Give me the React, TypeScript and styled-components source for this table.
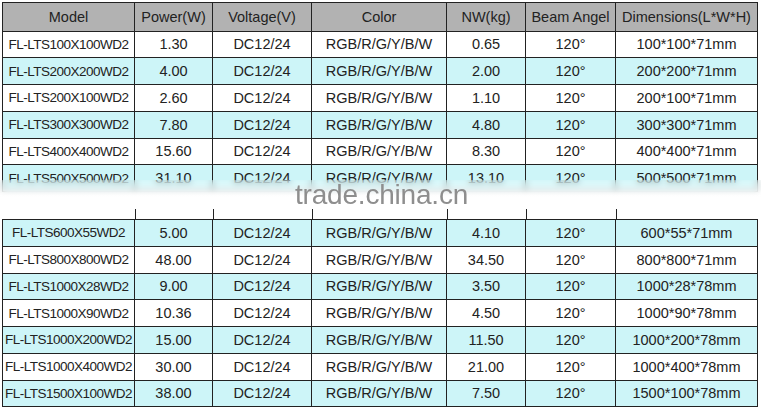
import React from "react";
import styled, { createGlobalStyle } from "styled-components";

const Global = createGlobalStyle`
  html, body { margin: 0; padding: 0; background: #fff; }
  body { font-family: "Liberation Sans", Arial, sans-serif; color: #222; }
`;

const Page = styled.div`
  position: relative;
  padding: 2px 0 0 2px;
  width: 761px;
  height: 408px;
  box-sizing: border-box;
  overflow: hidden;
`;

const Table = styled.table`
  border-collapse: collapse;
  table-layout: fixed;
  width: 755px;
`;

const HeadCell = styled.th`
  background: #b2b2b2;
  border: 1px solid #222;
  height: 27.5px;
  padding: 0;
  font-weight: normal;
  font-size: 14.5px;
  color: #222;
  text-align: center;
  white-space: nowrap;
  overflow: hidden;
`;

const Row = styled.tr<{ $tint: boolean }>`
  background: ${(p) => (p.$tint ? "#cdf5f8" : "#ffffff")};
`;

const Cell = styled.td<{ $model?: boolean }>`
  border: 1px solid #222;
  height: 25.75px;
  padding: 0;
  text-align: center;
  font-size: ${(p) => (p.$model ? "13.5px" : "14.5px")};
  letter-spacing: ${(p) => (p.$model ? "-0.5px" : "0")};
  color: #222;
  white-space: nowrap;
  overflow: hidden;
`;

const BandCell = styled.td<{ $first?: boolean }>`
  border: none;
  border-bottom: 1px solid #222;
  height: 27px;
  padding: 0;
  background: ${(p) =>
    p.$first
      ? "#fff"
      : "linear-gradient(#222, #222) left bottom / 1px 10px no-repeat, #fff"};
`;

const BlurStrip = styled.div`
  position: absolute;
  left: 0;
  top: 180px;
  width: 761px;
  height: 17px;
  backdrop-filter: blur(3px);
  background: linear-gradient(
    rgba(255, 255, 255, 0.15),
    rgba(255, 255, 255, 0.55) 60%,
    rgba(255, 255, 255, 1)
  );
`;

const Watermark = styled.div`
  position: absolute;
  left: 295px;
  top: 179px;
  font-family: "Liberation Sans", Arial, sans-serif;
  font-size: 28px;
  color: #8e8e8e;
  letter-spacing: -0.2px;
  line-height: 32px;
`;

const widths = [132, 78, 99, 135, 79, 90, 142];
const headers = [
  "Model",
  "Power(W)",
  "Voltage(V)",
  "Color",
  "NW(kg)",
  "Beam Angel",
  "Dimensions(L*W*H)",
];

type R = [string, string, string, string];
const top: R[] = [
  ["FL-LTS100X100WD2", "1.30", "0.65", "100*100*71mm"],
  ["FL-LTS200X200WD2", "4.00", "2.00", "200*200*71mm"],
  ["FL-LTS200X100WD2", "2.60", "1.10", "200*100*71mm"],
  ["FL-LTS300X300WD2", "7.80", "4.80", "300*300*71mm"],
  ["FL-LTS400X400WD2", "15.60", "8.30", "400*400*71mm"],
  ["FL-LTS500X500WD2", "31.10", "13.10", "500*500*71mm"],
];
const bottom: R[] = [
  ["FL-LTS600X55WD2", "5.00", "4.10", "600*55*71mm"],
  ["FL-LTS800X800WD2", "48.00", "34.50", "800*800*71mm"],
  ["FL-LTS1000X28WD2", "9.00", "3.50", "1000*28*78mm"],
  ["FL-LTS1000X90WD2", "10.36", "4.50", "1000*90*78mm"],
  ["FL-LTS1000X200WD2", "15.00", "11.50", "1000*200*78mm"],
  ["FL-LTS1000X400WD2", "30.00", "21.00", "1000*400*78mm"],
  ["FL-LTS1500X100WD2", "38.00", "7.50", "1500*100*78mm"],
];

function DataRow({ r, tint }: { r: R; tint: boolean }) {
  return (
    <Row $tint={tint}>
      <Cell $model>{r[0]}</Cell>
      <Cell>{r[1]}</Cell>
      <Cell>DC12/24</Cell>
      <Cell>RGB/R/G/Y/B/W</Cell>
      <Cell>{r[2]}</Cell>
      <Cell>120°</Cell>
      <Cell>{r[3]}</Cell>
    </Row>
  );
}

export default function App() {
  return (
    <>
      <Global />
      <Page>
        <Table>
          <colgroup>
            {widths.map((w, i) => (
              <col key={i} style={{ width: w }} />
            ))}
          </colgroup>
          <thead>
            <tr>
              {headers.map((h) => (
                <HeadCell key={h}>{h}</HeadCell>
              ))}
            </tr>
          </thead>
          <tbody>
            {top.map((r, i) => (
              <DataRow key={r[0]} r={r} tint={i % 2 === 1} />
            ))}
            <tr>
              {widths.map((_, i) => (
                <BandCell key={i} $first={i === 0} />
              ))}
            </tr>
            {bottom.map((r, i) => (
              <DataRow key={r[0]} r={r} tint={i % 2 === 0} />
            ))}
          </tbody>
        </Table>
        <BlurStrip />
        <Watermark>trade.china.cn</Watermark>
      </Page>
    </>
  );
}
